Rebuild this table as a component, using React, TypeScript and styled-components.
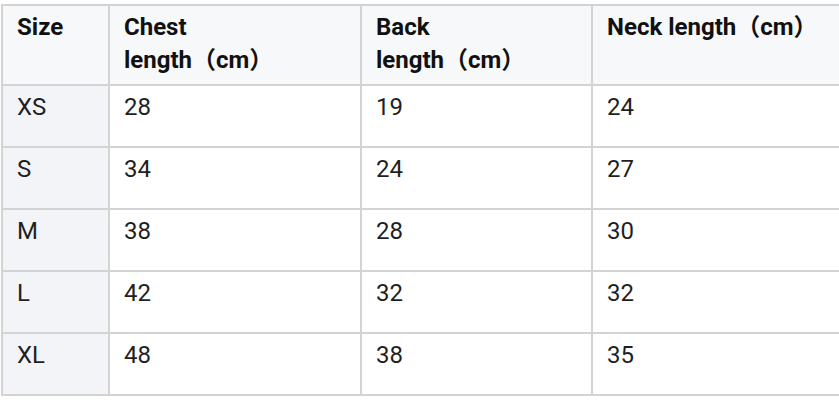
import React from "react";
import styled, { createGlobalStyle } from "styled-components";

const GlobalStyle = createGlobalStyle`
  html, body {
    margin: 0;
    padding: 0;
    background: #ffffff;
    overflow: hidden;
  }
  body {
    font-family: Roboto, "Noto Sans CJK SC", sans-serif;
    color: #1f1f1f;
  }
`;

// 헤더는 원본처럼 줄바꿈 위치를 고정
const headers = ["Size", "Chest\nlength（cm）", "Back\nlength（cm）", "Neck length（cm）"];

const colWidths = [107, 252, 231, 260];

const rows = [
  ["XS", "28", "19", "24"],
  ["S", "34", "24", "27"],
  ["M", "38", "28", "30"],
  ["L", "42", "32", "32"],
  ["XL", "48", "38", "35"],
];

const App = () => {
  return (
    <>
      <GlobalStyle />
      <StWrapper>
        <StTable>
          <colgroup>
            {colWidths.map((w, i) => (
              <StCol key={i} $w={w} />
            ))}
          </colgroup>
          <thead>
            <tr>
              {headers.map((h) => (
                <StTh key={h}>{h}</StTh>
              ))}
            </tr>
          </thead>
          <tbody>
            {rows.map((row) => (
              <tr key={row[0]}>
                {row.map((cell, i) => (
                  <StTd key={i} $first={i === 0}>
                    {cell}
                  </StTd>
                ))}
              </tr>
            ))}
          </tbody>
        </StTable>
      </StWrapper>
    </>
  );
};

export default App;

const StWrapper = styled.div`
  width: 839px;
  height: 403px;
  padding: 4px 0 0 1px;
  box-sizing: border-box;
  overflow: hidden;
`;

const StTable = styled.table`
  width: 850px;
  table-layout: fixed;
  border-collapse: collapse;
  font-size: 24px;
  line-height: 33px;
`;

const StCol = styled.col<{ $w: number }>`
  width: ${(p) => p.$w}px;
`;

const StTh = styled.th`
  height: 80px;
  padding: 5px 14px 4px;
  box-sizing: border-box;
  border: 2px solid #d3d3d3;
  background-color: #f6f8fa;
  text-align: left;
  vertical-align: top;
  font-weight: 700;
  color: #111111;
  white-space: pre-line;
`;

const StTd = styled.td<{ $first: boolean }>`
  height: 62px;
  padding: 5px 14px 4px;
  box-sizing: border-box;
  border: 2px solid #d3d3d3;
  background-color: ${(p) => (p.$first ? "#f2f4f8" : "#ffffff")};
  text-align: left;
  vertical-align: top;
  font-weight: 400;
  color: #1f1f1f;
`;
